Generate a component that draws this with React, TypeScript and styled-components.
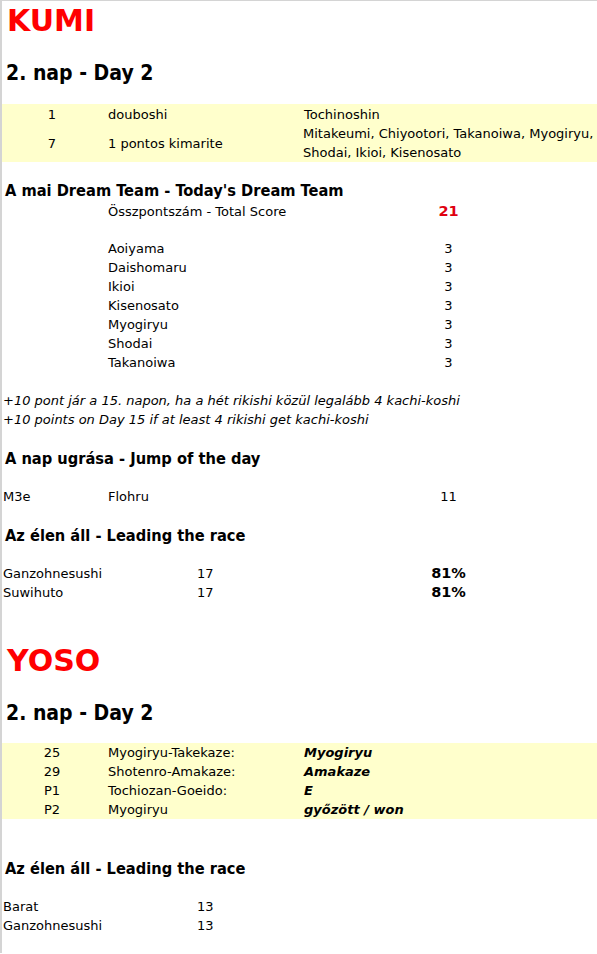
import React from "react";
import styled, { createGlobalStyle } from "styled-components";

const Global = createGlobalStyle`
  html, body { margin: 0; padding: 0; background: #ffffff; }
  body {
    font-family: "DejaVu Sans", sans-serif;
    font-size: 13px;
    color: #000000;
  }
`;

const Page = styled.div`
  border-left: 2px solid #d4d4d4;
  border-top: 1px solid #d4d4d4;
  min-height: 953px;
  box-sizing: border-box;
  display: flex;
  flex-direction: column;
`;

const Row = styled.div<{ $h: number; $bg?: string }>`
  display: grid;
  grid-template-columns: 100px 89px 107px 100px 101px 1fr;
  height: ${(p) => p.$h}px;
  background: ${(p) => p.$bg ?? "transparent"};
  align-items: center;
`;

const Cell = styled.div<{
  $col: number;
  $span?: number;
  $align?: "left" | "center";
  $bold?: boolean;
  $italic?: boolean;
  $color?: string;
  $size?: number;
}>`
  grid-column: ${(p) => p.$col} / span ${(p) => p.$span ?? 1};
  text-align: ${(p) => p.$align ?? "left"};
  padding-left: ${(p) => (p.$align === "center" ? 0 : p.$col === 1 ? 1 : 6)}px;
  font-size: ${(p) => p.$size ?? 13}px;
  font-weight: ${(p) => (p.$bold ? 700 : 400)};
  font-style: ${(p) => (p.$italic ? "italic" : "normal")};
  color: ${(p) => p.$color ?? "#000000"};
  line-height: 19px;
  white-space: nowrap;
`;

const Wrap = styled(Cell)`
  white-space: normal;
  padding-left: 5px;
  padding-right: 0;
`;

const Title = styled.div<{ $h: number }>`
  height: ${(p) => p.$h}px;
  display: flex;
  align-items: center;
  padding-left: 5px;
  font-family: "DejaVu Sans", sans-serif;
  font-size: 30px;
  font-weight: 700;
  color: #ff0000;
`;

const DayTitle = styled.div<{ $h: number }>`
  height: ${(p) => p.$h}px;
  display: flex;
  align-items: center;
  padding-left: 4px;
  font-family: "DejaVu Sans Condensed", "DejaVu Sans", sans-serif;
  font-size: 21px;
  font-weight: 700;
`;

const Heading = styled.div<{ $h: number }>`
  height: ${(p) => p.$h}px;
  display: flex;
  align-items: center;
  padding-left: 3px;
  font-family: "DejaVu Sans Condensed", "DejaVu Sans", sans-serif;
  font-size: 16.3px;
  font-weight: 700;
`;

const Note = styled.div`
  height: 19px;
  line-height: 19px;
  padding-left: 1px;
  font-style: italic;
`;

const Spacer = styled.div<{ $h: number }>`
  height: ${(p) => p.$h}px;
`;

const BAND = "#ffffcc";

const team = ["Aoiyama", "Daishomaru", "Ikioi", "Kisenosato", "Myogiryu", "Shodai", "Takanoiwa"];

const yosoRows: [string, string, string][] = [
  ["25", "Myogiryu-Takekaze:", "Myogiryu"],
  ["29", "Shotenro-Amakaze:", "Amakaze"],
  ["P1", "Tochiozan-Goeido:", "E"],
  ["P2", "Myogiryu", "győzött / won"],
];

export default function App() {
  return (
    <Page>
      <Global />
      <Title $h={38}>KUMI</Title>
      <Spacer $h={18} />
      <DayTitle $h={32}>2. nap - Day 2</DayTitle>
      <Spacer $h={15} />

      <Row $h={20} $bg={BAND}>
        <Cell $col={1} $align="center">1</Cell>
        <Cell $col={2} $span={2}>douboshi</Cell>
        <Cell $col={4} $span={3}>Tochinoshin</Cell>
      </Row>
      <Row $h={38} $bg={BAND}>
        <Cell $col={1} $align="center">7</Cell>
        <Cell $col={2} $span={2}>1 pontos kimarite</Cell>
        <Wrap $col={4} $span={3}>Mitakeumi, Chiyootori, Takanoiwa, Myogiryu, Shodai, Ikioi, Kisenosato</Wrap>
      </Row>

      <Spacer $h={18} />
      <Heading $h={21}>A mai Dream Team - Today's Dream Team</Heading>
      <Row $h={20}>
        <Cell $col={2} $span={3}>Összpontszám - Total Score</Cell>
        <Cell $col={5} $align="center" $bold $size={14.5} $color="#e00010">21</Cell>
      </Row>
      <Spacer $h={18} />
      {team.map((n) => (
        <Row $h={19} key={n}>
          <Cell $col={2} $span={2}>{n}</Cell>
          <Cell $col={5} $align="center">3</Cell>
        </Row>
      ))}
      <Spacer $h={19} />
      <Note>+10 pont jár a 15. napon, ha a hét rikishi közül legalább 4 kachi-koshi</Note>
      <Note>+10 points on Day 15 if at least 4 rikishi get kachi-koshi</Note>
      <Spacer $h={19} />
      <Heading $h={20}>A nap ugrása - Jump of the day</Heading>
      <Spacer $h={19} />
      <Row $h={19}>
        <Cell $col={1}>M3e</Cell>
        <Cell $col={2} $span={2}>Flohru</Cell>
        <Cell $col={5} $align="center">11</Cell>
      </Row>
      <Spacer $h={19} />
      <Heading $h={20}>Az élen áll - Leading the race</Heading>
      <Spacer $h={19} />
      <Row $h={19}>
        <Cell $col={1} $span={2}>Ganzohnesushi</Cell>
        <Cell $col={3}>17</Cell>
        <Cell $col={5} $align="center" $bold $size={14.5}>81%</Cell>
      </Row>
      <Row $h={19}>
        <Cell $col={1} $span={2}>Suwihuto</Cell>
        <Cell $col={3}>17</Cell>
        <Cell $col={5} $align="center" $bold $size={14.5}>81%</Cell>
      </Row>

      <Spacer $h={38} />
      <Title $h={40}>YOSO</Title>
      <Spacer $h={16} />
      <DayTitle $h={34}>2. nap - Day 2</DayTitle>
      <Spacer $h={13} />
      {yosoRows.map(([a, b, c]) => (
        <Row $h={19} $bg={BAND} key={a}>
          <Cell $col={1} $align="center">{a}</Cell>
          <Cell $col={2} $span={2}>{b}</Cell>
          <Cell $col={4} $span={3} $bold $italic>{c}</Cell>
        </Row>
      ))}
      <Spacer $h={39} />
      <Heading $h={20}>Az élen áll - Leading the race</Heading>
      <Spacer $h={19} />
      <Row $h={19}>
        <Cell $col={1} $span={2}>Barat</Cell>
        <Cell $col={3}>13</Cell>
      </Row>
      <Row $h={19}>
        <Cell $col={1} $span={2}>Ganzohnesushi</Cell>
        <Cell $col={3}>13</Cell>
      </Row>
    </Page>
  );
}
